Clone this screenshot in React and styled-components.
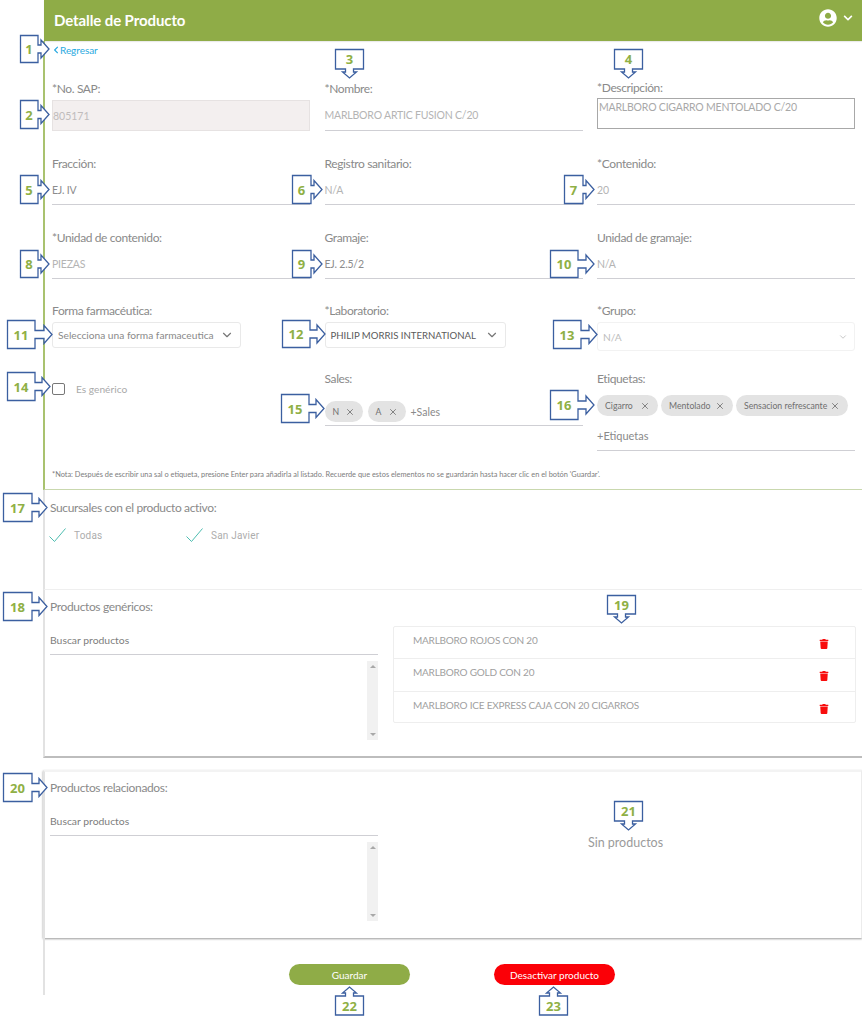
import React from 'react';
import styled, { createGlobalStyle } from 'styled-components';
import { FaUserCircle, FaChevronDown, FaChevronLeft, FaTrash } from 'react-icons/fa';
import { FiChevronDown, FiX } from 'react-icons/fi';

const GlobalStyle = createGlobalStyle`
  html, body {
    margin: 0;
    padding: 0;
    background: #fff;
    font-family: "Lato", "Liberation Sans", sans-serif;
  }
  * { box-sizing: border-box; }
`;

const Page = styled.div`
  position: relative;
  width: 862px;
  height: 1024px;
  overflow: hidden;
  background: #fff;
`;

const Frame = styled.div`
  margin-left: 43px;
  width: 819px;
`;

const Header = styled.header`
  height: 41px;
  margin-left: 1px;
  padding: 0 9px 0 10px;
  background: #8fac47;
  display: flex;
  align-items: center;
  justify-content: space-between;
  color: #fff;
  box-shadow: 0 1px 1px rgba(0, 0, 0, 0.08);
`;

const Title = styled.h1`
  margin: -1px 0 0;
  font-size: 15px;
  font-weight: 700;
  letter-spacing: -0.1px;
`;

const UserMenu = styled.div`
  display: flex;
  align-items: center;
  gap: 6px;
  margin-top: -6px;
`;

const FormSection = styled.section`
  height: 449px;
  padding: 0 0 0 7px;
  border-left: 2px solid #a9c26f;
  border-bottom: 1px solid #c9d8ae;
`;

const BackLink = styled.a`
  display: flex;
  align-items: center;
  gap: 0;
  height: 18px;
  color: #29a9e0;
  font-size: 10px;
  letter-spacing: -0.05px;
`;

const FormGrid = styled.div`
  display: grid;
  grid-template-columns: 258px 258px 258px;
  grid-template-rows: 75px 74px 73px 68px 105px;
  column-gap: 14.5px;
  margin-top: 17px;
`;

const Field = styled.div`
  display: flex;
  flex-direction: column;
`;

const Label = styled.label`
  display: flex;
  align-items: center;
  height: ${(p) => (p.$short ? '22px' : '24px')};
  color: #8a8a8a;
  font-size: 12px;
  letter-spacing: -0.38px;
`;

const TextValue = styled.div`
  display: flex;
  align-items: center;
  height: ${(p) => (p.$tall ? '31px' : '30px')};
  border-bottom: 1.5px solid #cfcfd4;
  color: ${(p) => (p.$dark ? '#8c8c8c' : '#b4b4b4')};
  font-size: 10.5px;
  letter-spacing: -0.2px;
`;

const DisabledValue = styled.div`
  display: flex;
  align-items: center;
  height: 31px;
  padding-left: 0;
  background: #f3efef;
  border: 1px solid #e6e2e2;
  color: #c0bcbc;
  font-size: 10.5px;
`;

const TextArea = styled.div`
  height: 31px;
  padding: 2px 1px;
  border: 1px solid #a8a8a8;
  color: #a8a8a8;
  font-size: 10.5px;
  letter-spacing: -0.2px;
  line-height: 12px;
`;

const Select = styled.div`
  display: flex;
  align-items: center;
  justify-content: space-between;
  width: ${(p) => p.$width};
  height: ${(p) => (p.$faded ? '29px' : '26px')};
  padding: 0 6px 0 5px;
  border: 1px solid ${(p) => (p.$faded ? '#f2f2f2' : '#e9e9e9')};
  border-radius: 3px;
  color: ${(p) => (p.$faded ? '#bdbdbd' : p.$dark ? '#5a5a5a' : '#8a8a8a')};
  font-size: ${(p) => (p.$dark ? '9.6px' : '10.2px')};
  white-space: nowrap;
  svg { color: ${(p) => (p.$faded ? '#bdbdbd' : '#777')}; }
`;

const CheckRow = styled.div`
  display: flex;
  align-items: center;
  gap: 11px;
  margin-top: 17px;
  color: #aaa;
  font-size: 10.2px;
`;

const CheckBox = styled.span`
  width: 13px;
  height: 12px;
  border: 1.5px solid #777;
  border-radius: 2px;
`;

const ChipInput = styled.div`
  display: flex;
  flex-wrap: wrap;
  align-items: center;
  gap: ${(p) => (p.$tight ? '3px' : '5px')};
  padding-top: ${(p) => (p.$tight ? '5px' : '11px')};
  padding-bottom: 3px;
  border-bottom: 1.5px solid #cfcfd4;
  color: #8a8a8a;
  font-size: 10.5px;
`;

const Chip = styled.span`
  display: inline-flex;
  align-items: center;
  justify-content: space-between;
  width: ${(p) => p.$width};
  height: 21px;
  padding: 0 8px;
  background: #e3e3e3;
  border-radius: 11px;
  color: #6f6f6f;
  font-size: 8.7px;
  white-space: nowrap;
`;

const TagPlaceholder = styled.div`
  width: 100%;
  padding-top: 10px;
  padding-bottom: 5px;
  font-size: 11px;
`;

const Note = styled.p`
  margin: -1px 0 0;
  color: #7d7d7d;
  font-size: 7.4px;
`;

const BranchSection = styled.section`
  height: 100px;
  padding: 9px 0 0 5px;
  border-left: 2px solid #e2e2e2;
  border-bottom: 1px solid #efefef;
`;

const SectionTitle = styled.h2`
  margin: 0;
  height: 18px;
  line-height: 18px;
  color: #8a8a8a;
  font-size: 12px;
  font-weight: 400;
  letter-spacing: -0.36px;
`;

const Branches = styled.div`
  display: flex;
  margin-top: 11px;
  margin-left: -1px;
  font-family: "Roboto", sans-serif;
`;

const Branch = styled.div`
  display: flex;
  align-items: center;
  gap: 8px;
  width: 137px;
  color: #adadad;
  font-size: 10px;
  letter-spacing: 0.2px;
`;

const ProductSection = styled.section`
  height: 168px;
  padding: 8px 6px 0 5px;
  border-left: 2px solid #e2e2e2;
  border-bottom: 2px solid #bdbdbd;
`;

const RelatedSection = styled.section`
  height: 168px;
  margin-top: 12px;
  padding: 7px 0 0 5px;
  border-top: 2px solid #f3f3f3;
  border-left: 2px solid #e2e2e2;
  border-right: 1px solid #ececec;
  box-shadow: 0 1px 2px rgba(0, 0, 0, 0.4);
`;

const Columns = styled.div`
  display: flex;
  gap: 15px;
`;

const SearchColumn = styled.div`
  width: 328px;
  flex-shrink: 0;
`;

const SearchInput = styled.div`
  display: flex;
  align-items: center;
  height: 30px;
  margin-top: 9px;
  border-bottom: 1.5px solid #cfcfd4;
  color: #7d7d7d;
  font-size: 10.4px;
`;

const ScrollTrack = styled.div`
  display: flex;
  flex-direction: column;
  justify-content: space-between;
  align-items: center;
  width: 11px;
  height: 79px;
  margin: 6px 0 0 auto;
  padding: 4px 0;
  background: #f1f1f1;
`;

const ArrowUp = styled.span`
  width: 0;
  height: 0;
  border: 3px solid transparent;
  border-top: 0;
  border-bottom: 3px solid #a8a8a8;
`;

const ArrowDown = styled.span`
  width: 0;
  height: 0;
  border: 3px solid transparent;
  border-bottom: 0;
  border-top: 3px solid #a8a8a8;
`;

const ProductList = styled.ul`
  width: 463px;
  height: 97px;
  margin: 10px 0 0;
  padding: 0;
  list-style: none;
  border: 1px solid #eeeeee;
  border-radius: 2px;
`;

const ProductRow = styled.li`
  display: flex;
  align-items: flex-start;
  justify-content: space-between;
  height: 32.3px;
  padding: 7px 26px 0 19px;
  color: #a0a0a0;
  font-size: 10px;
  letter-spacing: -0.22px;
  border-bottom: 1px solid #eeeeee;
  &:last-child { border-bottom: 0; }
  svg { margin-top: 5px; color: #f80d0d; }
`;

const EmptyColumn = styled.div`
  display: flex;
  justify-content: center;
  width: 465px;
  padding-top: 38px;
  color: #9b9b9b;
  font-size: 12.5px;
`;

const Footer = styled.footer`
  display: flex;
  justify-content: center;
  gap: 84px;
  height: 57px;
  padding: 26px 3px 0 0;
  border-left: 2px solid #e2e2e2;
`;

const PillButton = styled.button`
  width: 121px;
  height: 21px;
  padding: 0;
  border: 0;
  border-radius: 11px;
  background: ${(p) => (p.$danger ? '#fb0007' : '#8fac47')};
  color: #fff;
  font-family: inherit;
  font-size: 10px;
`;

const CalloutWrap = styled.div`
  position: absolute;
  left: ${(p) => p.$x}px;
  top: ${(p) => p.$y}px;
  width: ${(p) => p.$w}px;
  height: ${(p) => p.$h}px;
  svg { position: absolute; inset: 0; overflow: visible; }
`;

const CalloutNumber = styled.span`
  position: absolute;
  left: 0;
  top: ${(p) => p.$top}px;
  width: ${(p) => p.$bw}px;
  height: ${(p) => p.$bh}px;
  display: flex;
  align-items: center;
  justify-content: center;
  color: #8fb045;
  font-family: "Open Sans", sans-serif;
  font-size: 13px;
  font-weight: 700;
`;

// outline of the note: a box with an arrow on one side
const calloutPath = (dir, w, h, len) => {
  if (dir === 'right') {
    const m = h / 2;
    const head = w + len - 8;
    return `M.5 .5H${w}V${m - 4}H${head}V${m - 9}L${w + len} ${m}L${head} ${m + 9}V${m + 4}H${w}V${h - 0.5}H.5Z`;
  }
  const m = w / 2;
  if (dir === 'down') {
    const head = h + len - 6;
    return `M.5 .5H${w - 0.5}V${h}H${m + 4}V${head}H${m + 7}L${m} ${h + len}L${m - 7} ${head}H${m - 4}V${h}H.5Z`;
  }
  // up: the arrow sits above the box
  return `M.5 ${len}H${m - 4}V6H${m - 7}L${m} 0L${m + 7} 6H${m + 4}V${len}H${w - 0.5}V${len + h}H.5Z`;
};

const Callout = ({ n, dir = 'right', x, y, w, h, len }) => {
  const totalW = dir === 'right' ? w + len : w;
  const totalH = dir === 'right' ? h : h + len;
  return (
    <CalloutWrap $x={x} $y={y} $w={totalW} $h={totalH}>
      <svg width={totalW} height={totalH}>
        <path d={calloutPath(dir, w, h, len)} fill="#fff" stroke="#3b5fa0" strokeWidth="1.3" />
      </svg>
      <CalloutNumber $top={dir === 'up' ? len : 0} $bw={w} $bh={h}>{n}</CalloutNumber>
    </CalloutWrap>
  );
};

const callouts = [
  { n: 1, x: 20, y: 35, w: 18, h: 28, len: 11 },
  { n: 2, x: 20, y: 100, w: 18, h: 29, len: 11 },
  { n: 3, dir: 'down', x: 335, y: 49, w: 29, h: 20, len: 9 },
  { n: 4, dir: 'down', x: 614, y: 49, w: 29, h: 20, len: 9 },
  { n: 5, x: 20, y: 175, w: 18, h: 29, len: 11 },
  { n: 6, x: 292, y: 175, w: 19, h: 29, len: 11 },
  { n: 7, x: 564, y: 175, w: 19, h: 29, len: 11 },
  { n: 8, x: 20, y: 250, w: 18, h: 28, len: 11 },
  { n: 9, x: 292, y: 250, w: 19, h: 28, len: 11 },
  { n: 10, x: 550, y: 250, w: 28, h: 28, len: 16 },
  { n: 11, x: 7, y: 320, w: 28, h: 29, len: 17 },
  { n: 12, x: 282, y: 320, w: 28, h: 28, len: 15 },
  { n: 13, x: 553, y: 320, w: 28, h: 29, len: 16 },
  { n: 14, x: 7, y: 372, w: 28, h: 29, len: 15 },
  { n: 15, x: 281, y: 394, w: 28, h: 29, len: 15 },
  { n: 16, x: 550, y: 390, w: 28, h: 30, len: 16 },
  { n: 17, x: 3, y: 493, w: 29, h: 29, len: 15 },
  { n: 18, x: 3, y: 592, w: 29, h: 29, len: 15 },
  { n: 19, dir: 'down', x: 607, y: 595, w: 29, h: 19, len: 9 },
  { n: 20, x: 3, y: 773, w: 29, h: 29, len: 15 },
  { n: 21, dir: 'down', x: 614, y: 801, w: 29, h: 20, len: 9 },
  { n: 22, dir: 'up', x: 335, y: 987, w: 29, h: 19, len: 9 },
  { n: 23, dir: 'up', x: 539, y: 987, w: 29, h: 19, len: 9 },
];

const products = [
  'MARLBORO ROJOS CON 20',
  'MARLBORO GOLD CON 20',
  'MARLBORO ICE EXPRESS CAJA CON 20 CIGARROS',
];

const CheckMark = () => (
  <svg width="17" height="14" viewBox="0 0 17 14" fill="none">
    <path d="M.5 8.5L5.5 13.5L16.5 .5" stroke="#4dbdb0" strokeWidth="1" />
  </svg>
);

const ResultsScroll = () => (
  <ScrollTrack>
    <ArrowUp />
    <ArrowDown />
  </ScrollTrack>
);

export default function App() {
  return (
    <Page>
      <GlobalStyle />
      <Frame>
        <Header>
          <Title>Detalle de Producto</Title>
          <UserMenu>
            <FaUserCircle size={18} />
            <FaChevronDown size={10} />
          </UserMenu>
        </Header>

        <FormSection>
          <BackLink>
            <FaChevronLeft size={8} />
            Regresar
          </BackLink>
          <FormGrid>
            <Field>
              <Label>*No. SAP:</Label>
              <DisabledValue>805171</DisabledValue>
            </Field>
            <Field>
              <Label>*Nombre:</Label>
              <TextValue $tall>MARLBORO ARTIC FUSION C/20</TextValue>
            </Field>
            <Field>
              <Label $short>*Descripción:</Label>
              <TextArea>MARLBORO CIGARRO MENTOLADO C/20</TextArea>
            </Field>

            <Field>
              <Label>Fracción:</Label>
              <TextValue $dark>EJ. IV</TextValue>
            </Field>
            <Field>
              <Label>Registro sanitario:</Label>
              <TextValue>N/A</TextValue>
            </Field>
            <Field>
              <Label>*Contenido:</Label>
              <TextValue>20</TextValue>
            </Field>

            <Field>
              <Label>*Unidad de contenido:</Label>
              <TextValue>PIEZAS</TextValue>
            </Field>
            <Field>
              <Label>Gramaje:</Label>
              <TextValue $dark>EJ. 2.5/2</TextValue>
            </Field>
            <Field>
              <Label>Unidad de gramaje:</Label>
              <TextValue>N/A</TextValue>
            </Field>

            <Field>
              <Label>Forma farmacéutica:</Label>
              <Select $width="189px">
                Selecciona una forma farmaceutica
                <FiChevronDown size={14} />
              </Select>
            </Field>
            <Field>
              <Label>*Laboratorio:</Label>
              <Select $width="181px" $dark>
                PHILIP MORRIS INTERNATIONAL
                <FiChevronDown size={14} />
              </Select>
            </Field>
            <Field>
              <Label>*Grupo:</Label>
              <Select $width="258px" $faded>
                N/A
                <FiChevronDown size={10} />
              </Select>
            </Field>

            <Field>
              <CheckRow>
                <CheckBox />
                Es genérico
              </CheckRow>
            </Field>
            <Field>
              <Label>Sales:</Label>
              <ChipInput>
                <Chip $width="38px">N <FiX size={10} /></Chip>
                <Chip $width="38px">A <FiX size={10} /></Chip>
                +Sales
              </ChipInput>
            </Field>
            <Field>
              <Label>Etiquetas:</Label>
              <ChipInput $tight>
                <Chip $width="61px">Cigarro <FiX size={10} /></Chip>
                <Chip $width="72px">Mentolado <FiX size={10} /></Chip>
                <Chip $width="112px">Sensacion refrescante <FiX size={10} /></Chip>
                <TagPlaceholder>+Etiquetas</TagPlaceholder>
              </ChipInput>
            </Field>
          </FormGrid>
          <Note>
            *Nota: Después de escribir una sal o etiqueta, presione Enter para añadirla al listado. Recuerde que estos elementos no se guardarán hasta hacer clic en el botón 'Guardar'.
          </Note>
        </FormSection>

        <BranchSection>
          <SectionTitle>Sucursales con el producto activo:</SectionTitle>
          <Branches>
            <Branch><CheckMark /> Todas</Branch>
            <Branch><CheckMark /> San Javier</Branch>
          </Branches>
        </BranchSection>

        <ProductSection>
          <SectionTitle>Productos genéricos:</SectionTitle>
          <Columns>
            <SearchColumn>
              <SearchInput>Buscar productos</SearchInput>
              <ResultsScroll />
            </SearchColumn>
            <ProductList>
              {products.map((name) => (
                <ProductRow key={name}>
                  {name}
                  <FaTrash size={10} />
                </ProductRow>
              ))}
            </ProductList>
          </Columns>
        </ProductSection>

        <RelatedSection>
          <SectionTitle>Productos relacionados:</SectionTitle>
          <Columns>
            <SearchColumn>
              <SearchInput>Buscar productos</SearchInput>
              <ResultsScroll />
            </SearchColumn>
            <EmptyColumn>Sin productos</EmptyColumn>
          </Columns>
        </RelatedSection>

        <Footer>
          <PillButton>Guardar</PillButton>
          <PillButton $danger>Desactivar producto</PillButton>
        </Footer>
      </Frame>

      {callouts.map((c) => (
        <Callout key={c.n} {...c} />
      ))}
    </Page>
  );
}
